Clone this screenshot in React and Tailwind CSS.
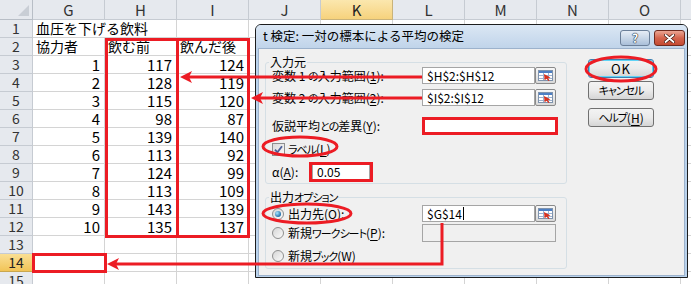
import React from 'react';

const jp = "font-['Noto_Sans_CJK_JP','Noto_Sans',sans-serif]";

const cols = ['G', 'H', 'I', 'J', 'K', 'L', 'M', 'N', 'O'];

const data = {
  1: ['血圧を下げる飲料', '', ''],
  2: ['協力者', '飲む前', '飲んだ後'],
  3: ['1', '117', '124'],
  4: ['2', '128', '119'],
  5: ['3', '115', '120'],
  6: ['4', '98', '87'],
  7: ['5', '139', '140'],
  8: ['6', '113', '92'],
  9: ['7', '124', '99'],
  10: ['8', '113', '109'],
  11: ['9', '143', '139'],
  12: ['10', '135', '137'],
};

function Sheet() {
  const rowNums = Array.from({ length: 15 }, (_, i) => i + 1);
  return (
    <div className={`${jp} flex flex-col`}>
      <div className="flex h-[20px]">
        <div className="w-[33px] shrink-0 relative bg-[#e6e9ee] border-r border-b border-[#b8bec6]">
          <svg className="absolute right-[3px] bottom-[3px]" width="11" height="11">
            <polygon points="11,0 11,11 0,11" fill="#c9ced5" />
          </svg>
        </div>
        {cols.map((c) => (
          <div
            key={c}
            className={`w-[72px] shrink-0 border-r border-b flex items-center justify-center text-[15px] leading-[18px] ${
              c === 'K'
                ? 'bg-linear-to-b from-[#fbe7ae] to-[#f6d27c] border-[#c9b37a] text-[#222]'
                : 'bg-[#e6e9ee] border-[#c6cbd2] text-[#333]'
            }`}
          >
            {c}
          </div>
        ))}
        <div className="flex-1 bg-[#e6e9ee] border-b border-[#c6cbd2]" />
      </div>
      {rowNums.map((r) => (
        <div key={r} className="flex h-[18px]">
          <div
            className={`w-[33px] shrink-0 border-r border-b flex items-center justify-center text-[14px] leading-[17px] ${
              r === 14
                ? 'bg-linear-to-b from-[#fadf93] to-[#f1c456] border-[#c9a74f] text-[#222]'
                : 'bg-[#e6e9ee] border-[#c6cbd2] text-[#333]'
            }`}
          >
            {r}
          </div>
          {cols.map((c, ci) => {
            const v = (data[r] && data[r][ci]) || '';
            const num = /^\d+$/.test(v);
            const noRight = r === 1 && ci === 0;
            return (
              <div
                key={c}
                className={`w-[72px] shrink-0 border-b border-[#d4d4d4] flex items-center whitespace-nowrap text-[14px] leading-[17px] text-black ${
                  noRight ? '' : 'border-r'
                } ${num ? 'justify-end pr-[4px] text-[15px]' : 'pl-[3px]'}`}
              >
                {v}
              </div>
            );
          })}
          <div className="flex-1 border-b border-[#d4d4d4]" />
        </div>
      ))}
    </div>
  );
}

const Input = ({ className = '', children }) => (
  <div
    className={`h-full shrink-0 bg-white border border-[#a5a5a5] flex items-center pl-[4px] text-[12px] text-black ${className}`}
  >
    {children}
  </div>
);

const RefBtn = () => (
  <div className="w-[21px] h-full shrink-0 border border-[#8a8a8a] rounded-[2px] bg-linear-to-b from-[#f7f7f7] to-[#d9d9d9] flex items-center justify-center">
    <svg width="15" height="11" viewBox="0 0 15 11">
      <rect x="0.5" y="0.5" width="14" height="10" fill="#ffffff" stroke="#7f93ad" />
      <rect x="1" y="1" width="13" height="2" fill="#4d7fc4" />
      <path d="M1 5.5h13M1 8.5h13M5.5 3v7M10.5 3v7" stroke="#9db2cf" strokeWidth="1" />
      <path d="M6 4 L12.5 7.6 L10 8.2 L11.6 10.6 L10.2 11 L8.7 8.7 L6.6 10.2 Z" fill="#d8321f" />
    </svg>
  </div>
);

const Btn = ({ children, focus }) => (
  <div
    className={`w-[66px] h-[19px] rounded-[3px] border flex items-center justify-center text-[12px] text-black bg-linear-to-b from-[#f3f3f3] via-[#ebebeb] to-[#d5d5d5] ${
      focus ? 'border-[#3c7fb1] shadow-[inset_0_0_0_1px_#5fd3f6]' : 'border-[#707070]'
    }`}
  >
    {children}
  </div>
);

const Radio = ({ on }) => (
  <div className="w-[12px] h-[12px] shrink-0 rounded-full border border-[#8e8f8f] bg-linear-to-br from-[#d6d6d6] to-[#fbfbfb] flex items-center justify-center">
    {on && (
      <div className="w-[6px] h-[6px] rounded-full bg-[radial-gradient(circle_at_35%_35%,#a6e6ff,#1a69a6_75%)]" />
    )}
  </div>
);

const U = ({ children }) => <span className="underline underline-offset-2">{children}</span>;
const K = ({ children }) => <span className="text-[11px] tracking-[-1px]">{children}</span>;

function Dialog() {
  return (
    <div
      className={`${jp} [font-feature-settings:'palt'] absolute left-[255px] top-[24px] w-[433px] h-[254px] rounded-t-[6px] border border-[#1d1d1d] bg-[#b9d2ec] flex flex-col px-[2px] pb-[1px]`}
    >
      <div className="h-[23px] shrink-0 flex items-start bg-linear-to-b from-[#dbe7f4] to-[#c0d4ea] -mx-[2px] px-[2px] rounded-t-[5px]">
        <div className="h-full flex items-center pl-[5px] text-[12.5px] text-black whitespace-nowrap [font-feature-settings:normal]">
          t 検定: 一対の標本による平均の検定
        </div>
        <div className="ml-auto mt-[5px] flex gap-[4px]">
          <div className="w-[30px] h-[16px] rounded-[3px] border border-[#6b7f99] bg-linear-to-b from-[#e6edf6] via-[#c9d7e8] to-[#a9bfd9] flex items-center justify-center">
            <span className="text-[12px] font-bold leading-none text-white [text-shadow:0_0_1px_#18263a,0_0_1px_#18263a,0_0_1px_#18263a]">
              ?
            </span>
          </div>
          <div className="w-[31px] h-[16px] rounded-[3px] border border-[#6f2a1e] bg-linear-to-b from-[#eaa593] via-[#d4644d] to-[#c44a32] flex items-center justify-center">
            <svg width="11" height="9" viewBox="0 0 11 9">
              <path d="M1.5 1 L9.5 8 M9.5 1 L1.5 8" stroke="#3a140c" strokeWidth="3.2" strokeLinecap="round" />
              <path d="M1.5 1 L9.5 8 M9.5 1 L1.5 8" stroke="#ffffff" strokeWidth="1.8" strokeLinecap="round" />
            </svg>
          </div>
        </div>
      </div>
      <div className="flex-1 bg-[#f0f0f0] border border-[#9cb2cc] flex pl-[6px] text-[12px] text-black">
        <div className="flex flex-col w-[302px] shrink-0">
          {/* group 1 */}
          <div className="relative mt-[13px] h-[122px] border border-[#d5dfe5] rounded-[3px] flex flex-col pl-[6px]">
            <div className="absolute -top-[9px] left-[3px] px-[1px] bg-[#f0f0f0] leading-[16px]">入力元</div>
            <div className="mt-[4px] h-[17px] flex items-center">
              <div className="w-[150px] shrink-0 whitespace-nowrap">
                変数 1 <K>の</K>入力範囲(<U>1</U>):
              </div>
              <Input className="w-[113px]">$H$2:$H$12</Input>
              <RefBtn />
            </div>
            <div className="mt-[5px] h-[17px] flex items-center">
              <div className="w-[150px] shrink-0 whitespace-nowrap">
                変数 2 <K>の</K>入力範囲(<U>2</U>):
              </div>
              <Input className="w-[113px]">$I$2:$I$12</Input>
              <RefBtn />
            </div>
            <div className="mt-[11px] h-[18px] flex items-center">
              <div className="w-[150px] shrink-0 whitespace-nowrap">
                仮説平均<K>との</K>差異(<U>Y</U>):
              </div>
              <Input className="w-[134px] h-[16px]">{''}</Input>
            </div>
            <div className="mt-[7px] h-[14px] flex items-center gap-[3px]">
              <div className="w-[13px] h-[13px] shrink-0 border border-[#8e8f8f] bg-linear-to-br from-[#d9d9d9] to-[#fafafa] flex items-center justify-center">
                <svg width="9" height="9" viewBox="0 0 9 9">
                  <path d="M1 4.6 L3.4 7.4 L8 1.2" stroke="#4b5f98" strokeWidth="1.8" fill="none" />
                </svg>
              </div>
              <div className="whitespace-nowrap">
                <K>ラベル</K>(<U>L</U>)
              </div>
            </div>
            <div className="mt-[7px] h-[18px] flex items-center">
              <div className="w-[40px] shrink-0">
                α(<U>A</U>):
              </div>
              <Input className="w-[58px] h-[16px]">0.05</Input>
            </div>
          </div>
          {/* group 2 */}
          <div className="relative mt-[13px] h-[72px] border border-[#d5dfe5] rounded-[3px] flex flex-col pl-[6px]">
            <div className="absolute -top-[9px] left-[3px] px-[1px] bg-[#f0f0f0] leading-[16px] whitespace-nowrap">
              出力<K>オプション</K>
            </div>
            <div className="mt-[7px] h-[17px] flex items-center">
              <div className="w-[150px] shrink-0 flex items-center gap-[4px] whitespace-nowrap">
                <Radio on />
                <span>
                  出力先(<U>O</U>):
                </span>
              </div>
              <Input className="w-[113px]">
                $G$14<span className="inline-block w-[1px] h-[13px] bg-black ml-[1px]" />
              </Input>
              <RefBtn />
            </div>
            <div className="mt-[2px] h-[18px] flex items-center">
              <div className="w-[150px] shrink-0 flex items-center gap-[4px] whitespace-nowrap">
                <Radio />
                <span>
                  新規<K>ワークシート</K>(<U>P</U>):
                </span>
              </div>
              <div className="w-[134px] h-full border border-[#a5a5a5] bg-[#f0f0f0]" />
            </div>
            <div className="mt-[5px] h-[18px] flex items-center">
              <div className="flex items-center gap-[4px] whitespace-nowrap">
                <Radio />
                <span>
                  新規<K>ブック</K>(<U>W</U>)
                </span>
              </div>
            </div>
          </div>
        </div>
        <div className="ml-[21px] pt-[10px] flex flex-col">
          <Btn focus>
            <span className="text-[13px] tracking-[1px]">OK</span>
          </Btn>
          <div className="mt-[3px]">
            <Btn>
              <K>キャンセル</K>
            </Btn>
          </div>
          <div className="mt-[8px]">
            <Btn>
              <K>ヘルプ</K>(<U>H</U>)
            </Btn>
          </div>
        </div>
      </div>
    </div>
  );
}

const arrow = (tx, ty) => `${tx},${ty} ${tx + 12},${ty - 6} ${tx + 9},${ty} ${tx + 12},${ty + 6}`;

function Marks() {
  return (
    <svg className="absolute left-0 top-0 pointer-events-none" width="691" height="284">
      <g stroke="#ec1c24" strokeWidth="3" fill="none">
        <rect x="106.5" y="39.5" width="71" height="197" />
        <rect x="177.5" y="39.5" width="71" height="197" />
        <rect x="33.5" y="254.5" width="72" height="17" />
        <rect x="423.5" y="118.5" width="133" height="15" />
        <rect x="310.5" y="163.5" width="61" height="17" />
        <ellipse cx="621" cy="69" rx="35" ry="12" />
        <ellipse cx="300" cy="146.5" rx="37" ry="9.5" />
        <ellipse cx="307" cy="213.5" rx="44" ry="9.5" />
        <path d="M422 77 H188" />
        <path d="M422 98 H259" />
        <path d="M442 223 V264 H115" />
      </g>
      <g fill="#ec1c24">
        <polygon points={arrow(180, 77)} />
        <polygon points={arrow(251, 98)} />
        <polygon points={arrow(107, 264)} />
      </g>
    </svg>
  );
}

export default function App() {
  return (
    <div className="relative w-[691px] h-[284px] overflow-hidden bg-white">
      <Sheet />
      <Dialog />
      <Marks />
    </div>
  );
}
